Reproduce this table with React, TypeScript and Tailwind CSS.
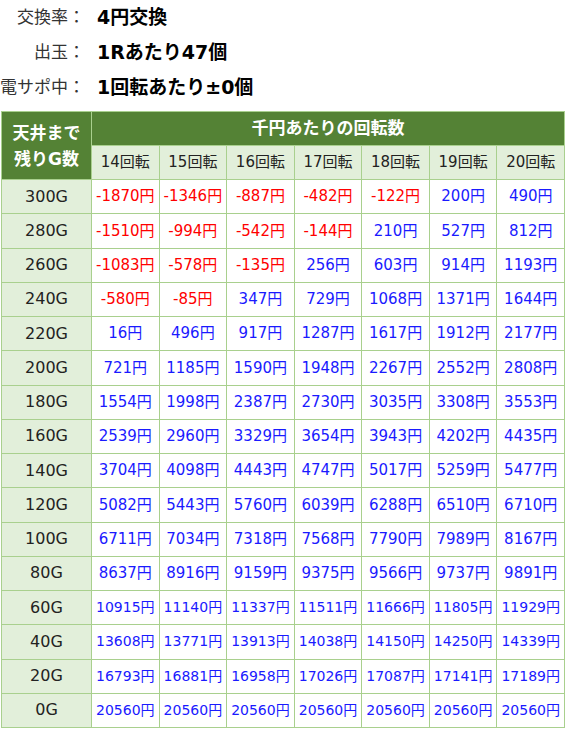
import React from "react";

const FONT = { fontFamily: '"DejaVu Sans", "Noto Sans CJK JP", sans-serif' };

const cols = [14, 15, 16, 17, 18, 19, 20];

const rows: [string, number[]][] = [
  ["300G", [-1870, -1346, -887, -482, -122, 200, 490]],
  ["280G", [-1510, -994, -542, -144, 210, 527, 812]],
  ["260G", [-1083, -578, -135, 256, 603, 914, 1193]],
  ["240G", [-580, -85, 347, 729, 1068, 1371, 1644]],
  ["220G", [16, 496, 917, 1287, 1617, 1912, 2177]],
  ["200G", [721, 1185, 1590, 1948, 2267, 2552, 2808]],
  ["180G", [1554, 1998, 2387, 2730, 3035, 3308, 3553]],
  ["160G", [2539, 2960, 3329, 3654, 3943, 4202, 4435]],
  ["140G", [3704, 4098, 4443, 4747, 5017, 5259, 5477]],
  ["120G", [5082, 5443, 5760, 6039, 6288, 6510, 6710]],
  ["100G", [6711, 7034, 7318, 7568, 7790, 7989, 8167]],
  ["80G", [8637, 8916, 9159, 9375, 9566, 9737, 9891]],
  ["60G", [10915, 11140, 11337, 11511, 11666, 11805, 11929]],
  ["40G", [13608, 13771, 13913, 14038, 14150, 14250, 14339]],
  ["20G", [16793, 16881, 16958, 17026, 17087, 17141, 17189]],
  ["0G", [20560, 20560, 20560, 20560, 20560, 20560, 20560]],
];

const info: [string, string][] = [
  ["交換率：", "4円交換"],
  ["出玉：", "1Rあたり47個"],
  ["電サポ中：", "1回転あたり±0個"],
];

export default function App() {
  return (
    <div className="w-[567px] h-[729px] bg-white overflow-hidden" style={FONT}>
      <div className="flex flex-col">
        {info.map(([label, value]) => (
          <div key={label} className="flex items-center h-[35px]">
            <div className="w-[85px] text-right text-[17px] text-[#333333]">{label}</div>
            <div className="ml-[12px] text-[19px] font-bold text-black">{value}</div>
          </div>
        ))}
      </div>
      <div className="mt-[6px] ml-px w-[564px] p-px bg-[#a9d08e] grid gap-px grid-cols-[89px_repeat(7,minmax(0,1fr))] grid-rows-[33px_33px_repeat(16,33.25px)]">
        <div className="row-span-2 bg-[#548235] flex flex-col items-center justify-center text-white font-bold text-[17px] leading-[26px]">
          <div>天井まで</div>
          <div>残りG数</div>
        </div>
        <div className="col-span-7 bg-[#548235] flex items-center justify-center text-white font-bold text-[17px]">
          千円あたりの回転数
        </div>
        {cols.map((c) => (
          <div key={c} className="bg-[#e2efda] flex items-center justify-center text-[15px] text-[#222222]">
            {c}回転
          </div>
        ))}
        {rows.map(([g, vals]) => (
          <React.Fragment key={g}>
            <div className="bg-[#e2efda] flex items-center justify-center text-[16px] text-[#222222]">
              {g}
            </div>
            {vals.map((v, i) => {
              const neg = v < 0;
              const big = Math.abs(v) >= 10000;
              return (
                <div
                  key={i}
                  className={
                    "bg-white flex items-center justify-center whitespace-nowrap " +
                    (neg ? "text-[#ff0000] " : "text-[#1a1aff] ") +
                    (big ? "text-[14px]" : "text-[15px]")
                  }
                >
                  {v}円
                </div>
              );
            })}
          </React.Fragment>
        ))}
      </div>
    </div>
  );
}
